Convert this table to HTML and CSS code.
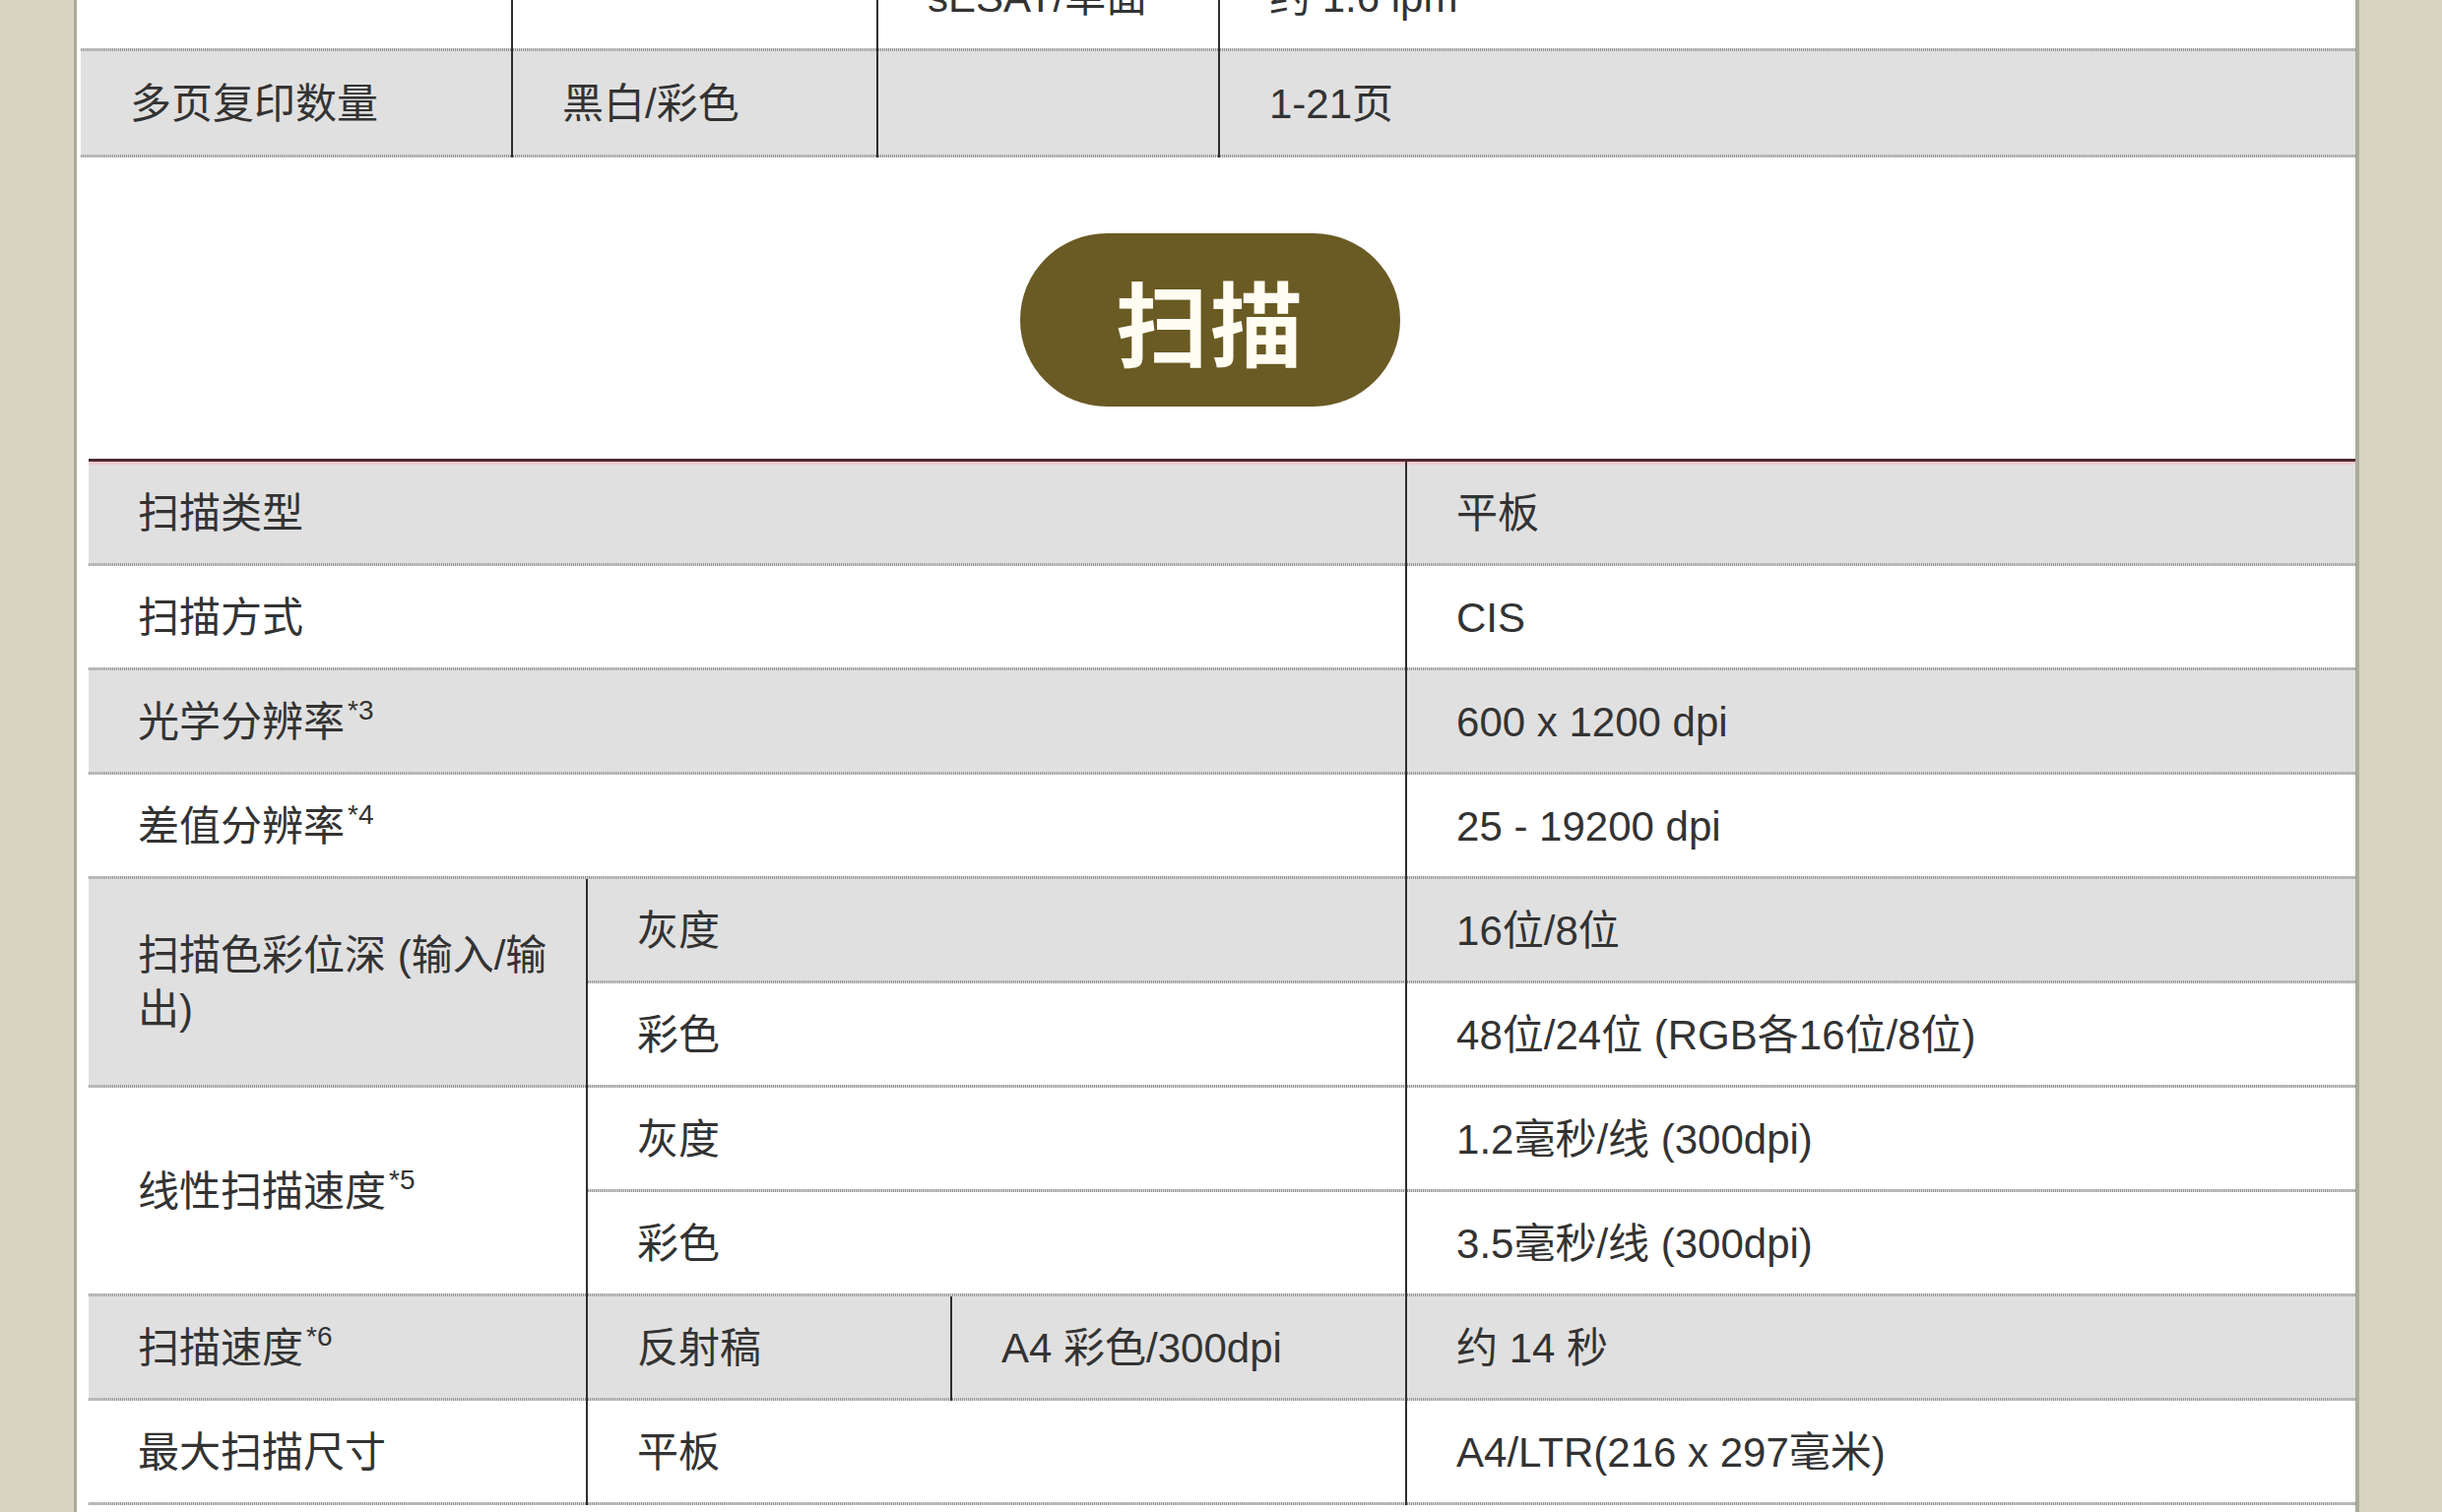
FILE: index.html
```html
<!DOCTYPE html>
<html lang="zh-CN">
<head>
<meta charset="utf-8">
<title>扫描规格</title>
<link rel="stylesheet" href="styles.css">
</head>
<body>
<div class="page">
  <table class="spec spec-copy">
    <colgroup>
      <col class="cc1"><col class="cc2"><col class="cc3"><col class="cc4">
    </colgroup>
    <tr class="row-white">
      <td></td>
      <td class="vl"></td>
      <td class="vl">sESAT/单面</td>
      <td class="vl">约 1.6 ipm</td>
    </tr>
    <tr class="row-gray">
      <td>多页复印数量</td>
      <td class="vl">黑白/彩色</td>
      <td class="vl"></td>
      <td class="vl">1-21页</td>
    </tr>
  </table>

  <div class="section-head">
    <h2 class="pill">扫描</h2>
  </div>

  <table class="spec spec-scan">
    <colgroup>
      <col class="sc1"><col class="sc2"><col class="sc3"><col class="sc4">
    </colgroup>
    <tr class="row-gray first">
      <td colspan="3">扫描类型</td>
      <td class="vl">平板</td>
    </tr>
    <tr class="row-white">
      <td colspan="3">扫描方式</td>
      <td class="vl">CIS</td>
    </tr>
    <tr class="row-gray">
      <td colspan="3">光学分辨率<sup>*3</sup></td>
      <td class="vl">600 x 1200 dpi</td>
    </tr>
    <tr class="row-white">
      <td colspan="3">差值分辨率<sup>*4</sup></td>
      <td class="vl">25 - 19200 dpi</td>
    </tr>
    <tr class="row-gray">
      <td rowspan="2" class="gray">扫描色彩位深 (输入/输出)</td>
      <td colspan="2" class="vl">灰度</td>
      <td class="vl">16位/8位</td>
    </tr>
    <tr class="row-white">
      <td colspan="2" class="vl">彩色</td>
      <td class="vl">48位/24位 (RGB各16位/8位)</td>
    </tr>
    <tr class="row-white">
      <td rowspan="2">线性扫描速度<sup>*5</sup></td>
      <td colspan="2" class="vl">灰度</td>
      <td class="vl">1.2毫秒/线 (300dpi)</td>
    </tr>
    <tr class="row-white">
      <td colspan="2" class="vl">彩色</td>
      <td class="vl">3.5毫秒/线 (300dpi)</td>
    </tr>
    <tr class="row-gray">
      <td>扫描速度<sup>*6</sup></td>
      <td class="vl">反射稿</td>
      <td class="vl">A4 彩色/300dpi</td>
      <td class="vl">约 14 秒</td>
    </tr>
    <tr class="row-white">
      <td>最大扫描尺寸</td>
      <td colspan="2" class="vl">平板</td>
      <td class="vl">A4/LTR(216 x 297毫米)</td>
    </tr>
  </table>
</div>
</body>
</html>
```

FILE: styles.css
```css
html, body {
  margin: 0;
  padding: 0;
}

body {
  background: #d9d4c0;
  font-family: "Liberation Sans", "Noto Sans CJK SC", sans-serif;
  color: #333333;
  overflow: hidden;
}

.page {
  margin: -56px 0 0 75px;
  width: 2314px;
  min-height: 1700px;
  background: #ffffff;
  border-left: 3px solid #a9ab9b;
  border-right: 4px solid #a9ab9b;
}

.spec {
  border-collapse: separate;
  border-spacing: 0;
  table-layout: fixed;
  font-size: 42px;
  line-height: 1.3;
}

.spec td {
  padding: 0 20px 0 50px;
  vertical-align: middle;
  text-align: left;
  background-image: repeating-linear-gradient(90deg, #959595 0 1px, #dcdcdc 1px 2px);
  background-size: 100% 3px;
  background-repeat: no-repeat;
  background-position: left bottom;
  white-space: normal;
}

.spec td.vl {
  border-left: 2px solid #2e2e2e;
}

.row-gray td,
.spec td.gray {
  background-color: #e0e0e0;
}

.row-white td {
  background-color: #ffffff;
}

.row-white td.gray {
  background-color: #e0e0e0;
}

.spec sup {
  font-size: 28px;
  line-height: 0;
  vertical-align: 17px;
  margin-left: 3px;
}

/* copy table (tail of previous section) */
.spec-copy {
  margin-left: 4px;
  width: 2310px;
}

.spec-copy tr {
  height: 108px;
}

.cc1 { width: 437px; }
.cc2 { width: 371px; }
.cc3 { width: 347px; }
.cc4 { width: 1155px; }

/* section heading */
.section-head {
  display: flex;
  justify-content: center;
  padding: 77px 12px 53px 0;
}

.pill {
  margin: 0;
  width: 386px;
  height: 176px;
  border-radius: 88px;
  background: #6a5a24;
  color: #fffdf2;
  font-family: "Noto Sans CJK SC", sans-serif;
  font-size: 94px;
  font-weight: 700;
  line-height: 1;
  display: flex;
  align-items: center;
  justify-content: center;
  letter-spacing: 2px;
}

/* scan table */
.spec-scan {
  margin-left: 12px;
  width: 2302px;
  border-top: 3px solid #4e2a2e;
}

.spec-scan tr {
  height: 106px;
}

.spec-scan tr.first td {
  box-shadow: inset 0 3px 0 #f3cbd1;
}

.sc1 { width: 505px; }
.sc2 { width: 370px; }
.sc3 { width: 462px; }
.sc4 { width: 965px; }
```
